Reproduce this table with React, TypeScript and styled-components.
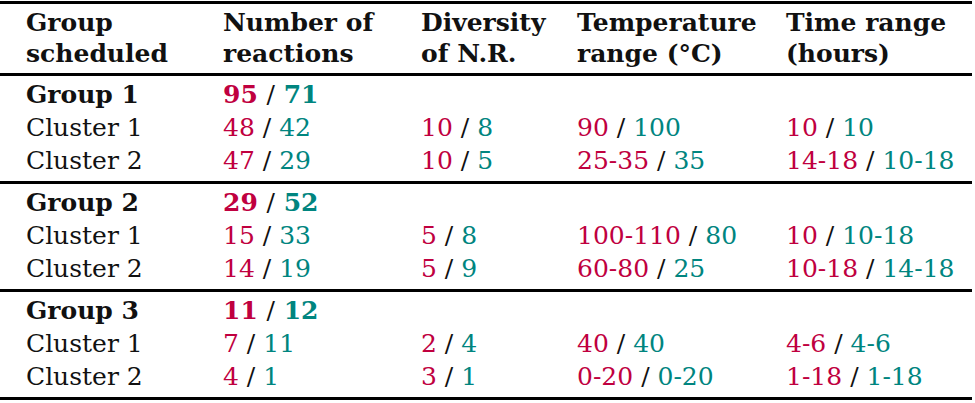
import React from "react";
import styled, { createGlobalStyle } from "styled-components";

const red = "#c0003f";
const teal = "#00857f";

const GlobalStyle = createGlobalStyle`
    html, body {
        margin: 0;
        padding: 0;
        background: #ffffff;
    }
    body {
        font-family: "DejaVu Serif", "Liberation Serif", serif;
        color: #111111;
    }
`

const Table = styled.div`
    width: 972px;
    padding-top: 1px;
    display: flex;
    flex-direction: column;
`

const Section = styled.div`
    border-top: 3px solid #000;
    display: flex;
    flex-direction: column;
`

const Head = styled(Section)`
    padding: 3px 0 4px;
`

const Body = styled(Section)`
    padding: 2px 0 4px;
`

const Row = styled.div<{ $lh: number }>`
    display: grid;
    grid-template-columns: 197px 198px 156px 209px 1fr;
    padding-left: 26px;
    font-size: 25px;
    line-height: ${(p) => p.$lh}px;
    white-space: nowrap;
`

const HeadCell = styled.div`
    font-weight: bold;
`

const Cell = styled.div<{ $bold?: boolean }>`
    font-weight: ${(p) => (p.$bold ? "bold" : "normal")};
`

const A = styled.span`
    color: ${red};
`

const B = styled.span`
    color: ${teal};
`

const Slash = styled.span`
    font-weight: normal;
`

const BottomRule = styled.div`
    border-top: 3px solid #000;
`

type Pair = [string, string];

type Group = {
    name: string;
    total: Pair;
    clusters: { name: string; values: Pair[] }[];
};

const groups: Group[] = [
    {
        name: "Group 1",
        total: ["95", "71"],
        clusters: [
            { name: "Cluster 1", values: [["48", "42"], ["10", "8"], ["90", "100"], ["10", "10"]] },
            { name: "Cluster 2", values: [["47", "29"], ["10", "5"], ["25-35", "35"], ["14-18", "10-18"]] },
        ],
    },
    {
        name: "Group 2",
        total: ["29", "52"],
        clusters: [
            { name: "Cluster 1", values: [["15", "33"], ["5", "8"], ["100-110", "80"], ["10", "10-18"]] },
            { name: "Cluster 2", values: [["14", "19"], ["5", "9"], ["60-80", "25"], ["10-18", "14-18"]] },
        ],
    },
    {
        name: "Group 3",
        total: ["11", "12"],
        clusters: [
            { name: "Cluster 1", values: [["7", "11"], ["2", "4"], ["40", "40"], ["4-6", "4-6"]] },
            { name: "Cluster 2", values: [["4", "1"], ["3", "1"], ["0-20", "0-20"], ["1-18", "1-18"]] },
        ],
    },
];

// red value / teal value
const PairText: React.FC<{ pair: Pair; bold?: boolean }> = ({ pair, bold }) => (
    <Cell $bold={bold}>
        <A>{pair[0]}</A> <Slash>/</Slash> <B>{pair[1]}</B>
    </Cell>
);

const App: React.FC = () => {
    return (
        <>
            <GlobalStyle />
            <Table>
                <Head>
                    <Row $lh={31}>
                        <HeadCell>Group</HeadCell>
                        <HeadCell>Number of</HeadCell>
                        <HeadCell>Diversity</HeadCell>
                        <HeadCell>Temperature</HeadCell>
                        <HeadCell>Time range</HeadCell>
                    </Row>
                    <Row $lh={31}>
                        <HeadCell>scheduled</HeadCell>
                        <HeadCell>reactions</HeadCell>
                        <HeadCell>of N.R.</HeadCell>
                        <HeadCell>range (°C)</HeadCell>
                        <HeadCell>(hours)</HeadCell>
                    </Row>
                </Head>
                {groups.map((g) => (
                    <Body key={g.name}>
                        <Row $lh={33}>
                            <Cell $bold>{g.name}</Cell>
                            <PairText pair={g.total} bold />
                        </Row>
                        {g.clusters.map((c) => (
                            <Row $lh={33} key={c.name}>
                                <Cell>{c.name}</Cell>
                                {c.values.map((v, j) => (
                                    <PairText key={j} pair={v} />
                                ))}
                            </Row>
                        ))}
                    </Body>
                ))}
                <BottomRule />
            </Table>
        </>
    );
};

export default App;
